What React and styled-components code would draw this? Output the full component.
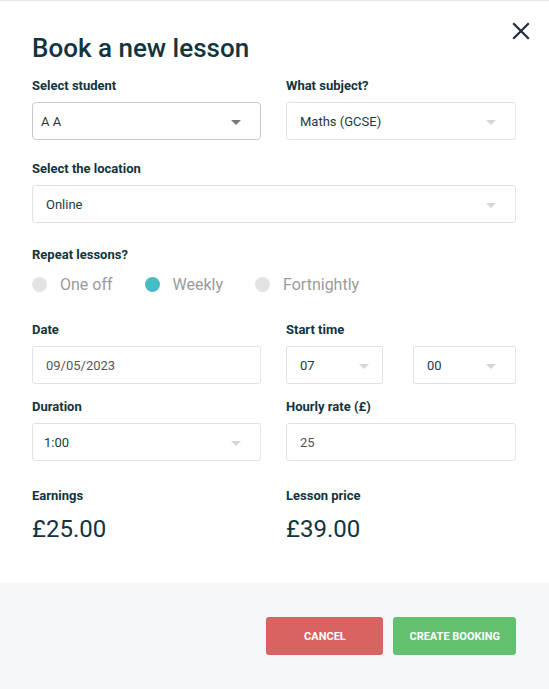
import React from "react";
import styled, { createGlobalStyle } from "styled-components";

const Global = createGlobalStyle`
  html, body { margin: 0; padding: 0; background: #ffffff; }
  body { font-family: Roboto, "Noto Sans", "Liberation Sans", sans-serif; }
  * { box-sizing: border-box; }
`;

const Dialog = styled.div`
  position: relative;
  width: 549px;
  height: 689px;
  display: flex;
  flex-direction: column;
  border-top: 1px solid #e4e6e8;
  background: #fff;
`;

const Body = styled.div`
  flex: 1;
  padding: 31px 33px 0 32px;
`;

const Close = styled.button`
  position: absolute;
  top: 20px;
  right: 19px;
  width: 19px;
  height: 19px;
  padding: 0;
  border: 0;
  background: transparent;
  cursor: pointer;
  display: flex;
  align-items: center;
  justify-content: center;
`;

const Title = styled.h1`
  margin: 0;
  font-size: 26px;
  line-height: 32px;
  font-weight: 500;
  color: #11343d;
`;

const Grid = styled.div`
  display: grid;
  grid-template-columns: 229px 1fr;
  column-gap: 25px;
  margin-top: ${(p) => p.$mt || 0}px;
`;

const Section = styled.div`
  margin-top: ${(p) => p.$mt || 0}px;
`;

const Label = styled.div`
  font-size: 13px;
  line-height: 16px;
  font-weight: 700;
  color: #11343d;
  margin-bottom: 8px;
`;

const TimeGrid = styled.div`
  display: grid;
  grid-template-columns: 97px 1fr;
  column-gap: 30px;
`;

const Box = styled.div`
  position: relative;
  height: 38px;
  display: flex;
  align-items: center;
  padding-left: ${(p) => (p.$pad ?? 13)}px;
  border: 1px solid ${(p) => (p.$strong ? "#c9c9c9" : "#e2e2e2")};
  border-radius: ${(p) => (p.$radius ?? 3)}px;
  font-size: 13px;
  color: ${(p) => p.$color || "#1c3a43"};
  background: #fff;
`;

const Arrow = styled.span`
  position: absolute;
  top: 50%;
  right: ${(p) => p.$right ?? 19}px;
  margin-top: -1px;
  width: 0;
  height: 0;
  border-left: 5px solid transparent;
  border-right: 5px solid transparent;
  border-top: 5px solid ${(p) => (p.$strong ? "#777777" : "#d6d6d6")};
`;

const Radios = styled.div`
  display: flex;
  align-items: center;
  gap: 32px;
  margin-top: 10px;
  height: 22px;
`;

const RadioItem = styled.label`
  display: flex;
  align-items: center;
  gap: 13px;
  font-size: 16px;
  color: #9b9b9b;
`;

const Dot = styled.span`
  width: 15px;
  height: 15px;
  border-radius: 50%;
  background: ${(p) => (p.$on ? "#45bdc5" : "#e3e3e3")};
`;

const Amount = styled.div`
  font-size: 24px;
  line-height: 28px;
  color: #11343d;
  margin-top: 11px;
`;

const Footer = styled.div`
  height: 106px;
  background: #f5f8fb;
  display: flex;
  justify-content: flex-end;
  align-items: flex-start;
  gap: 10px;
  padding: 34px 33px 0 0;
`;

const Button = styled.button`
  height: 38px;
  min-width: 117px;
  padding: 0 16px;
  border: 0;
  border-radius: 3px;
  background: ${(p) => p.$bg};
  color: #fff;
  font-family: Roboto, "Liberation Sans", sans-serif;
  font-size: 11px;
  font-weight: 700;
  text-transform: uppercase;
  cursor: pointer;
`;

function Select({ children, strong, pad, arrowRight, radius, color }) {
  return (
    <Box $strong={strong} $pad={pad} $radius={radius} $color={color}>
      {children}
      <Arrow $strong={strong} $right={arrowRight} />
    </Box>
  );
}

export default function App() {
  return (
    <>
      <Global />
      <Dialog>
        <Close aria-label="Close">
          <svg width="18" height="18" viewBox="0 0 18 18">
            <path d="M2 2 L16 16 M16 2 L2 16" stroke="#1f2b45" strokeWidth="2.2" strokeLinecap="square" />
          </svg>
        </Close>
        <Body>
          <Title>Book a new lesson</Title>

          <Grid $mt={14}>
            <div>
              <Label>Select student</Label>
              <Select strong pad={8} radius={4} color="#333">A A</Select>
            </div>
            <div>
              <Label>What subject?</Label>
              <Select>Maths (GCSE)</Select>
            </div>
          </Grid>

          <Section $mt={21}>
            <Label>Select the location</Label>
            <Select>Online</Select>
          </Section>

          <Section $mt={24}>
            <Label>Repeat lessons?</Label>
            <Radios>
              <RadioItem><Dot />One off</RadioItem>
              <RadioItem><Dot $on />Weekly</RadioItem>
              <RadioItem><Dot />Fortnightly</RadioItem>
            </Radios>
          </Section>

          <Grid $mt={27}>
            <div>
              <Label>Date</Label>
              <Box $color="#555">09/05/2023</Box>
            </div>
            <div>
              <Label>Start time</Label>
              <TimeGrid>
                <Select radius={2} arrowRight={13}>07</Select>
                <Select radius={2}>00</Select>
              </TimeGrid>
            </div>
          </Grid>

          <Grid $mt={15}>
            <div>
              <Label>Duration</Label>
              <Select pad={11}>1:00</Select>
            </div>
            <div>
              <Label>Hourly rate (£)</Label>
              <Box $color="#555">25</Box>
            </div>
          </Grid>

          <Grid $mt={27}>
            <div>
              <Label>Earnings</Label>
              <Amount>£25.00</Amount>
            </div>
            <div>
              <Label>Lesson price</Label>
              <Amount>£39.00</Amount>
            </div>
          </Grid>
        </Body>
        <Footer>
          <Button $bg="#d96262">Cancel</Button>
          <Button $bg="#63c06f">Create booking</Button>
        </Footer>
      </Dialog>
    </>
  );
}
